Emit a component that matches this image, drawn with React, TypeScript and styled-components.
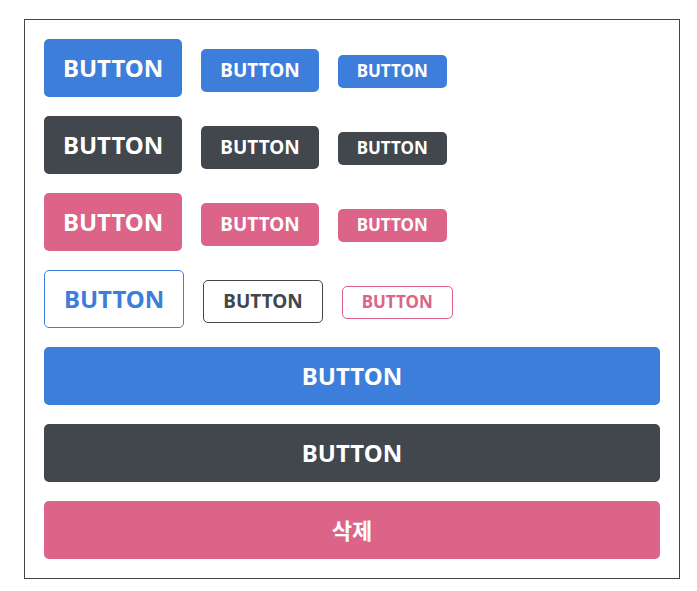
import React from "react";
import styled, { createGlobalStyle, css } from "styled-components";

const palette = {
  blue: "#3e7edb",
  gray: "#42464d",
  pink: "#db6488",
};

type Color = keyof typeof palette;
type Size = "large" | "medium" | "small";

const GlobalStyle = createGlobalStyle`
  html, body {
    margin: 0;
    background: #ffffff;
  }
  body {
    font-family: "Noto Sans", "Noto Sans CJK KR", sans-serif;
  }
`;

const Page = styled.div`
  padding: 19px 0 0 24px;
`;

const Frame = styled.div`
  box-sizing: border-box;
  width: 656px;
  height: 560px;
  border: 1px solid #444444;
  padding: 19px;
  display: flex;
  flex-direction: column;
  gap: 19px;
`;

const Row = styled.div`
  display: flex;
  align-items: baseline;
  gap: 19px;
`;

const sizes = {
  large: css`
    height: 58px;
    font-size: 24px;
  `,
  medium: css`
    height: 43px;
    font-size: 19px;
  `,
  small: css`
    height: 33px;
    font-size: 17px;
  `,
};

const Button = styled.button<{
  $color: Color;
  $size: Size;
  $outline?: boolean;
  $fullWidth?: boolean;
}>`
  box-sizing: border-box;
  display: inline-flex;
  align-items: center;
  justify-content: center;
  padding: 0 19px 2px;
  border: none;
  border-radius: 5px;
  font-family: "Noto Sans", "Noto Sans CJK KR", sans-serif;
  font-weight: 700;
  color: #ffffff;
  background: ${({ $color }) => palette[$color]};
  cursor: pointer;
  ${({ $size }) => sizes[$size]}

  ${({ $outline, $color }) =>
    $outline &&
    css`
      color: ${palette[$color]};
      background: none;
      border: 1px solid ${palette[$color]};
    `}

  ${({ $fullWidth }) =>
    $fullWidth &&
    css`
      width: 100%;
    `}
`;

const Hangul = styled.span`
  font-family: "Noto Sans CJK KR", sans-serif;
  font-weight: 700;
  font-size: 22px;
`;

const colors: Color[] = ["blue", "gray", "pink"];

export default function App() {
  return (
    <Page>
      <GlobalStyle />
      <Frame>
        {colors.map((c) => (
          <Row key={c}>
            <Button $color={c} $size="large">
              BUTTON
            </Button>
            <Button $color={c} $size="medium">
              BUTTON
            </Button>
            <Button $color={c} $size="small">
              BUTTON
            </Button>
          </Row>
        ))}
        <Row>
          <Button $color="blue" $size="large" $outline>
            BUTTON
          </Button>
          <Button $color="gray" $size="medium" $outline>
            BUTTON
          </Button>
          <Button $color="pink" $size="small" $outline>
            BUTTON
          </Button>
        </Row>
        <Button $color="blue" $size="large" $fullWidth>
          BUTTON
        </Button>
        <Button $color="gray" $size="large" $fullWidth>
          BUTTON
        </Button>
        <Button $color="pink" $size="large" $fullWidth>
          <Hangul>삭제</Hangul>
        </Button>
      </Frame>
    </Page>
  );
}
